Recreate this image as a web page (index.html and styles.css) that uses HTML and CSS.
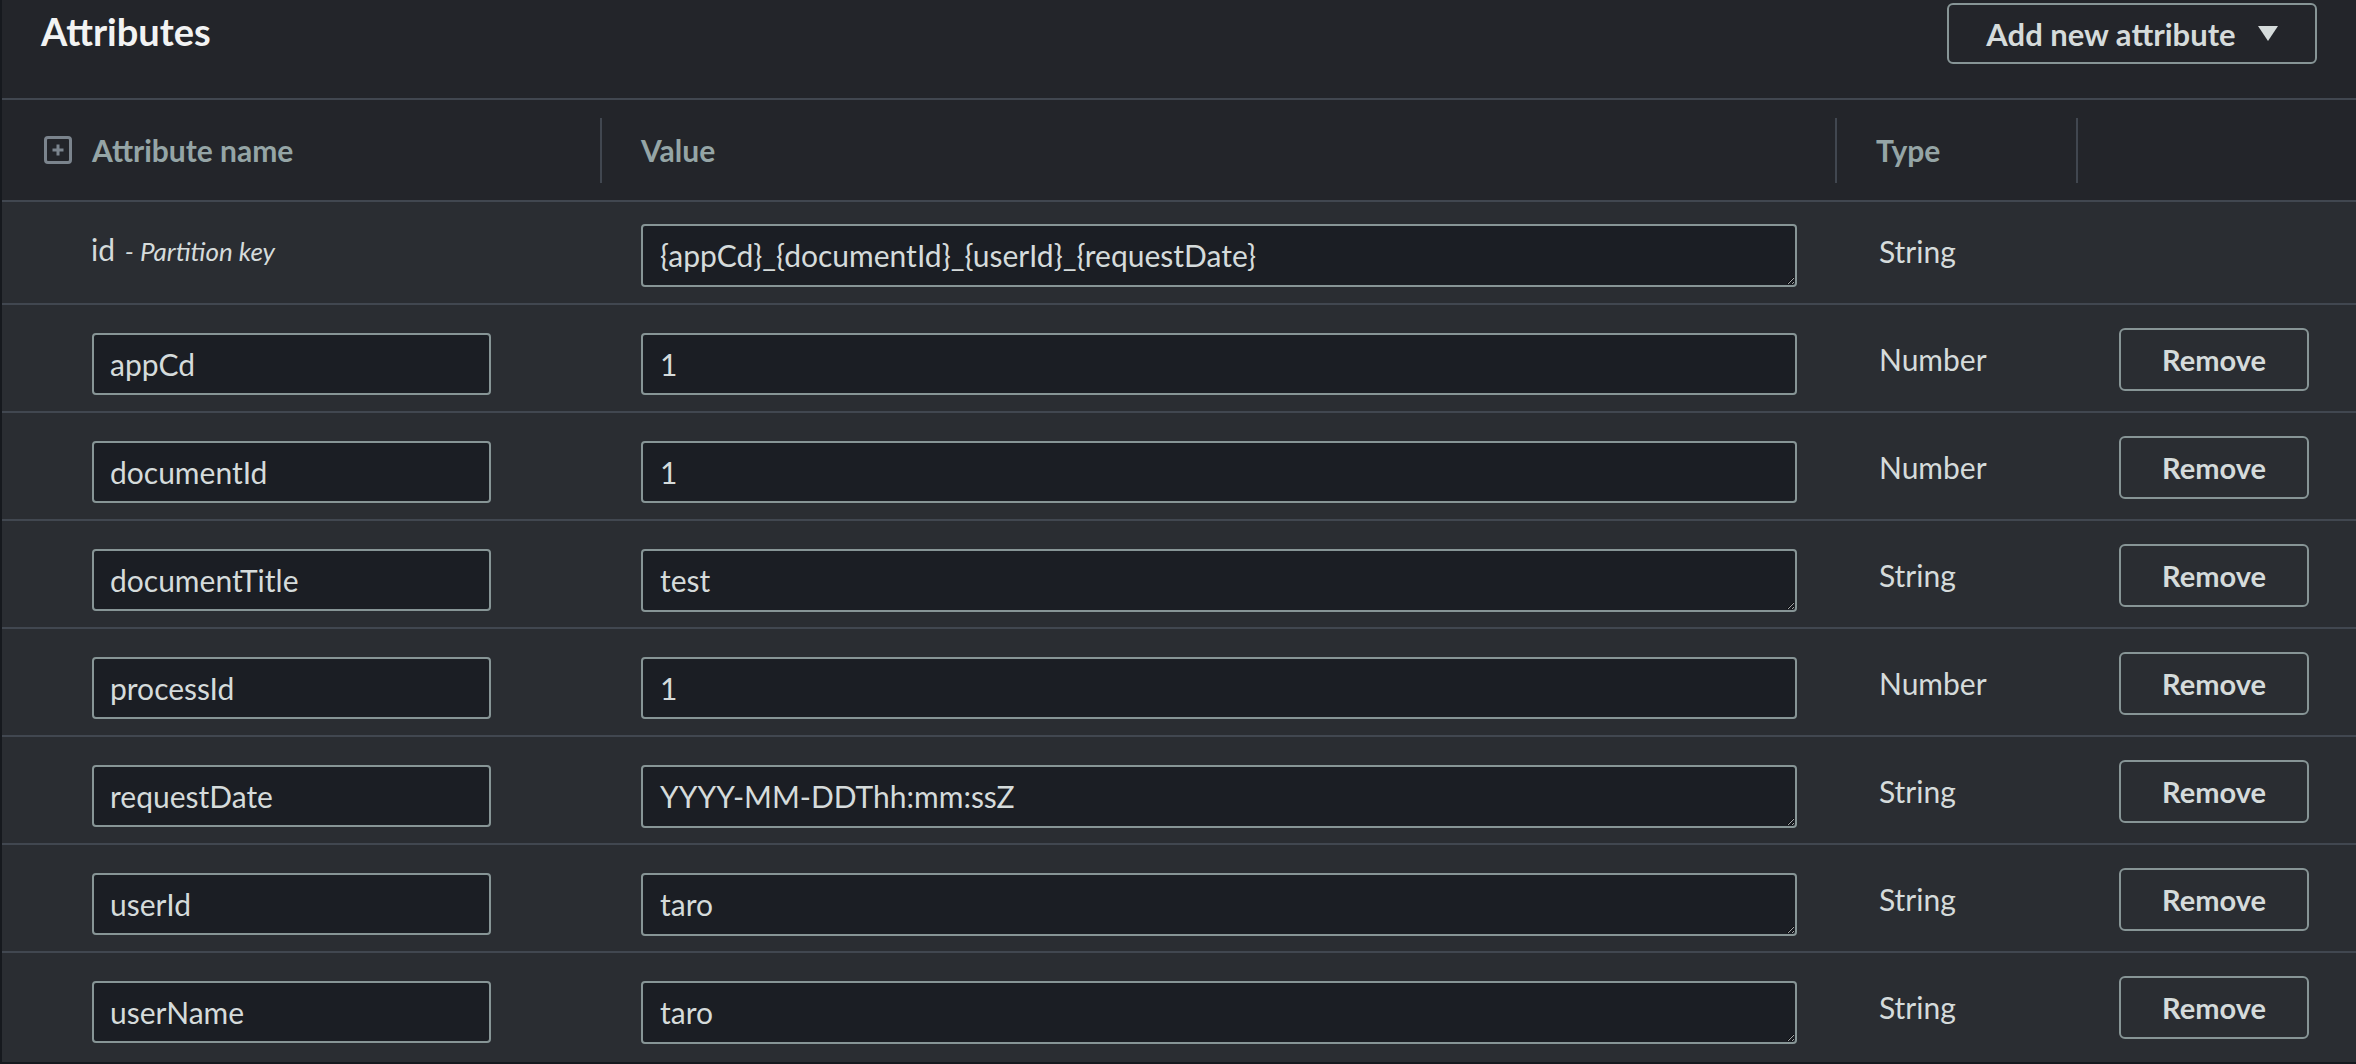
FILE: index.html
```html
<!DOCTYPE html>
<html lang="en">
<head>
<meta charset="utf-8">
<title>Attributes</title>
<link rel="stylesheet" href="styles.css">
</head>
<body>
<div class="panel">
  <div class="panel-header">
    <h2 class="title">Attributes</h2>
    <button class="btn btn-add" type="button">
      <span>Add new attribute</span>
      <svg class="caret" width="20" height="15" viewBox="0 0 20 15" aria-hidden="true"><path d="M0 0H20L10 15Z" fill="currentColor"/></svg>
    </button>
  </div>

  <div class="table">
    <div class="thead">
      <div class="th th-name">
        <svg class="expand-icon" width="28" height="28" viewBox="0 0 28 28" aria-hidden="true">
          <rect x="1.5" y="1.5" width="25" height="25" rx="2.5" fill="none" stroke="currentColor" stroke-width="3"/>
          <path d="M14 8.5V19.5M8.5 14H19.5" stroke="currentColor" stroke-width="3"/>
        </svg>
        <span>Attribute name</span>
      </div>
      <div class="th"><div class="th-inner">Value</div></div>
      <div class="th"><div class="th-inner">Type</div></div>
      <div class="th"><div class="th-inner"></div></div>
    </div>

    <div class="row row-key">
      <div class="cell cell-name"><span class="key-name">id</span> <i class="key-label">- Partition key</i></div>
      <div class="cell cell-value"><textarea class="field field-area" rows="1">{appCd}_{documentId}_{userId}_{requestDate}</textarea></div>
      <div class="cell cell-type">String</div>
      <div class="cell cell-action"></div>
    </div>

    <div class="row">
      <div class="cell cell-name"><input class="field field-name" type="text" value="appCd"></div>
      <div class="cell cell-value"><input class="field field-value" type="text" value="1"></div>
      <div class="cell cell-type">Number</div>
      <div class="cell cell-action"><button class="btn btn-remove" type="button">Remove</button></div>
    </div>

    <div class="row">
      <div class="cell cell-name"><input class="field field-name" type="text" value="documentId"></div>
      <div class="cell cell-value"><input class="field field-value" type="text" value="1"></div>
      <div class="cell cell-type">Number</div>
      <div class="cell cell-action"><button class="btn btn-remove" type="button">Remove</button></div>
    </div>

    <div class="row">
      <div class="cell cell-name"><input class="field field-name" type="text" value="documentTitle"></div>
      <div class="cell cell-value"><textarea class="field field-area" rows="1">test</textarea></div>
      <div class="cell cell-type">String</div>
      <div class="cell cell-action"><button class="btn btn-remove" type="button">Remove</button></div>
    </div>

    <div class="row">
      <div class="cell cell-name"><input class="field field-name" type="text" value="processId"></div>
      <div class="cell cell-value"><input class="field field-value" type="text" value="1"></div>
      <div class="cell cell-type">Number</div>
      <div class="cell cell-action"><button class="btn btn-remove" type="button">Remove</button></div>
    </div>

    <div class="row">
      <div class="cell cell-name"><input class="field field-name" type="text" value="requestDate"></div>
      <div class="cell cell-value"><textarea class="field field-area" rows="1">YYYY-MM-DDThh:mm:ssZ</textarea></div>
      <div class="cell cell-type">String</div>
      <div class="cell cell-action"><button class="btn btn-remove" type="button">Remove</button></div>
    </div>

    <div class="row">
      <div class="cell cell-name"><input class="field field-name" type="text" value="userId"></div>
      <div class="cell cell-value"><textarea class="field field-area" rows="1">taro</textarea></div>
      <div class="cell cell-type">String</div>
      <div class="cell cell-action"><button class="btn btn-remove" type="button">Remove</button></div>
    </div>

    <div class="row row-last">
      <div class="cell cell-name"><input class="field field-name" type="text" value="userName"></div>
      <div class="cell cell-value"><textarea class="field field-area" rows="1">taro</textarea></div>
      <div class="cell cell-type">String</div>
      <div class="cell cell-action"><button class="btn btn-remove" type="button">Remove</button></div>
    </div>
  </div>
</div>
</body>
</html>
```
FILE: styles.css
```css
* {
  box-sizing: border-box;
}

html, body {
  margin: 0;
  padding: 0;
}

body {
  background: #16191e;
  font-family: Lato, "Liberation Sans", sans-serif;
  font-size: 30px;
  color: #d5dbdb;
  color-scheme: dark;
  height: 1064px;
  overflow: hidden;
}

.panel {
  margin-left: 2px;
  height: 1062px;
  background: #2a2d32;
  display: flex;
  flex-direction: column;
  overflow: hidden;
}

.panel-header {
  height: 100px;
  flex: none;
  background: #23252a;
  border-bottom: 2px solid #414750;
  display: flex;
  align-items: flex-start;
  justify-content: space-between;
  padding: 0 39px 0 39px;
}

.title {
  margin: 8px 0 0 0;
  font-size: 38px;
  line-height: 46px;
  font-weight: 700;
  color: #f2f3f3;
}

.btn {
  font: inherit;
  font-weight: 700;
  color: #d5dbdb;
  background: transparent;
  border: 2px solid #879596;
  border-radius: 6px;
  display: flex;
  align-items: center;
  justify-content: center;
  cursor: pointer;
}

.btn-add {
  margin-top: 3px;
  width: 370px;
  height: 61px;
  padding: 0;
  gap: 22px;
  font-size: 31px;
}

.caret {
  display: block;
  color: #d5dbdb;
}

.table {
  display: flex;
  flex-direction: column;
}

.thead,
.row {
  display: grid;
  grid-template-columns: 598px 1235px 241px 1fr;
}

.thead {
  height: 102px;
  background: #23252a;
  border-bottom: 2px solid #414750;
  align-items: center;
  color: #95a5a6;
  font-weight: 700;
  line-height: 36px;
}

.th-name {
  display: flex;
  align-items: center;
  gap: 20px;
  padding-left: 42px;
}

.expand-icon {
  display: block;
  color: #7b848d;
}

.th-inner {
  height: 65px;
  border-left: 2px solid #414750;
  padding-left: 39px;
  display: flex;
  align-items: center;
}

.row {
  height: 108px;
  border-bottom: 2px solid #414750;
  align-items: start;
}

.row-key {
  height: 103px;
}

.row-last {
  height: 109px;
  border-bottom: none;
}

.cell {
  line-height: 40px;
}

.cell-name {
  padding-left: 90px;
}

.cell-value {
  padding-left: 41px;
}

.cell-type {
  padding-left: 44px;
  margin-top: 34px;
}

.cell-action {
  padding-left: 43px;
}

.row-key .cell-type {
  margin-top: 29px;
}

.row-key .cell-name {
  margin-top: 27px;
  padding-left: 89px;
}

.key-label {
  font-size: 26px;
  margin-left: 2px;
}

.field {
  display: block;
  font: inherit;
  font-size: 30px;
  color: #d5dbdb;
  background: #1b1e24;
  border: 2px solid #879596;
  border-radius: 4px;
  outline: none;
  margin: 28px 0 0 0;
}

.field-name {
  width: 399px;
  height: 62px;
  padding: 0 16px;
}

.field-value {
  width: 1156px;
  height: 62px;
  padding: 0 17px;
}

.field-area {
  width: 1156px;
  height: 63px;
  padding: 11px 17px;
  line-height: 36px;
  resize: vertical;
  overflow: hidden;
  white-space: nowrap;
}

.row-key .field-area {
  margin-top: 22px;
}

.btn-remove {
  width: 190px;
  height: 63px;
  margin-top: 23px;
  padding: 0;
  font-size: 29px;
}
```
